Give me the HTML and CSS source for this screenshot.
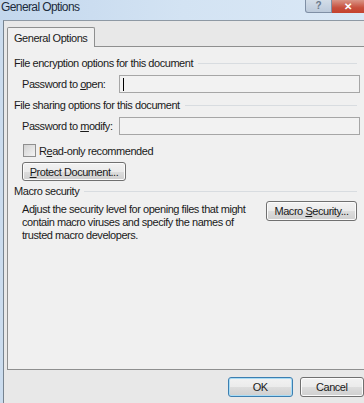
FILE: index.html
```html
<!DOCTYPE html>
<html lang="en">
<head>
  <meta charset="UTF-8">
  <title>General Options</title>
  <link rel="stylesheet" href="styles.css">
</head>
<body>
  <div class="window">
    <div class="titlebar">
      <span class="title">General Options</span>
      <div class="caption-buttons">
        <span class="cap-btn help">?</span>
        <span class="cap-btn close">&#x2715;</span>
      </div>
    </div>

    <div class="client">
      <div class="tabs">
        <div class="tab active">General Options</div>
      </div>

      <div class="panel">
        <div class="group-title">File encryption options for this document</div>
        <div class="field-row">
          <label>Password to <u>o</u>pen:</label>
          <div class="textbox"><span class="caret"></span></div>
        </div>

        <div class="group-title">File sharing options for this document</div>
        <div class="field-row">
          <label>Password to <u>m</u>odify:</label>
          <div class="textbox"></div>
        </div>
        <div class="check-row">
          <span class="checkbox"></span>
          <span>R<u>e</u>ad-only recommended</span>
        </div>
        <div class="btn-row">
          <button class="btn protect"><u>P</u>rotect Document...</button>
        </div>

        <div class="group-title">Macro security</div>
        <div class="macro-row">
          <p>Adjust the security level for opening files that might contain macro viruses and specify the names of trusted macro developers.</p>
          <button class="btn macro">Macro <u>S</u>ecurity...</button>
        </div>
      </div>

      <div class="footer">
        <button class="btn default">OK</button>
        <button class="btn cancel">Cancel</button>
      </div>
    </div>
  </div>
</body>
</html>
```

FILE: styles.css
```css
/* Windows 7 style dialog */
body {
  margin: 0;
  width: 364px;
  height: 403px;
  overflow: hidden;
  font-family: 'Liberation Sans', Arial, sans-serif;
  font-size: 11px;
  letter-spacing: -0.45px;
  color: #1a1a1a;
  background: #cbdcee;
  white-space: nowrap;
}

.window {
  display: flex;
  flex-direction: column;
  height: 100%;
}

.titlebar {
  height: 20px;
  display: flex;
  justify-content: space-between;
  background: linear-gradient(90deg, #c3d7ed 0%, #d3e3f3 50%, #dae8f6 100%);
}

.title {
  font-size: 12px;
  letter-spacing: -0.6px;
  color: #1c2b3d;
  padding: 1px 0 0 1px;
  line-height: 13px;
}

.caption-buttons {
  display: flex;
  height: 13px;
}

.cap-btn {
  display: flex;
  align-items: center;
  justify-content: center;
  font-size: 10px;
  line-height: 1;
  letter-spacing: 0;
}

.cap-btn.help {
  width: 25px;
  border: 1px solid #7f8fa5;
  border-top: none;
  border-radius: 0 0 0 3px;
  background: linear-gradient(#d3dde8, #bccadb);
  color: #6a7a8c;
  font-weight: bold;
}

.cap-btn.close {
  width: 32px;
  background: linear-gradient(#d99586, #c74f3c 60%, #c4422f);
  color: #fff;
  font-weight: bold;
}

.client {
  flex: 1;
  display: flex;
  flex-direction: column;
  margin-left: 3px;
  border-left: 1px solid #76838f;
  border-top: 1px solid #8e99a4;
  background: #e8e8e8;
  padding-left: 3px;
}

.tabs {
  display: flex;
  padding-top: 5px;
  height: 20px;
}

.tab {
  width: 80px;
  border: 1px solid #8e8f8f;
  border-bottom: none;
  border-radius: 2px 2px 0 0;
  background: #f0f0f0;
  padding-left: 6px;
  line-height: 20px;
  position: relative;
  top: 1px;
  z-index: 1;
}

.panel {
  height: 324px;
  margin-right: -10px;
  border: 1px solid #8e8f8f;
  background: #f0f0f0;
  padding: 9px 0 0 6px;
  box-sizing: border-box;
}

.group-title {
  display: flex;
  align-items: center;
  width: 343px;
  height: 14px;
  line-height: 14px;
}

.group-title::after {
  content: "";
  flex: 1;
  border-top: 1px solid #d8dce0;
  margin-left: 5px;
}

.field-row {
  display: flex;
  align-items: center;
  margin: 5px 0 5px 8px;
}

.field-row label {
  width: 97px;
}

.textbox {
  width: 236px;
  height: 16px;
  border: 1px solid #a6a6a6;
  background: #f2f2f2;
  display: flex;
  align-items: center;
  padding-left: 3px;
}

.caret {
  width: 1px;
  height: 13px;
  background: #000;
}

.check-row {
  display: flex;
  align-items: center;
  margin: 9px 0 0 9px;
  height: 13px;
}

.checkbox {
  width: 11px;
  height: 11px;
  border: 1px solid #8f8f8f;
  background: linear-gradient(135deg, #d2d2d2, #f4f4f4);
  margin-right: 3px;
}

.btn {
  font-family: inherit;
  font-size: 11px;
  letter-spacing: -0.45px;
  color: #1a1a1a;
  border: 1px solid #707070;
  border-radius: 3px;
  background: linear-gradient(#f2f2f2 0%, #ebebeb 50%, #dddddd 51%, #cfcfcf 100%);
  box-shadow: inset 0 0 0 1px #fbfbfb;
  padding: 0;
  height: 19px;
  white-space: nowrap;
}

.btn-row {
  margin: 5px 0 0 8px;
}

.btn.protect {
  width: 104px;
}

.btn-row + .group-title {
  margin-top: 3px;
}

.macro-row {
  display: flex;
  align-items: flex-start;
  margin: 3px 0 0 8px;
}

.macro-row p {
  margin: 2px 0 0;
  width: 240px;
  line-height: 13px;
  white-space: normal;
}

.btn.macro {
  width: 91px;
  height: 20px;
  margin-left: 4px;
}

.footer {
  flex: 1;
  display: flex;
  align-items: flex-start;
  padding: 7px 0 0 221px;
  gap: 7px;
}

.btn.default {
  width: 66px;
  height: 20px;
  border-color: #3c7fb1;
  box-shadow: inset 0 0 0 1px #a9dcf5;
}

.btn.cancel {
  width: 66px;
  height: 20px;
}
```
